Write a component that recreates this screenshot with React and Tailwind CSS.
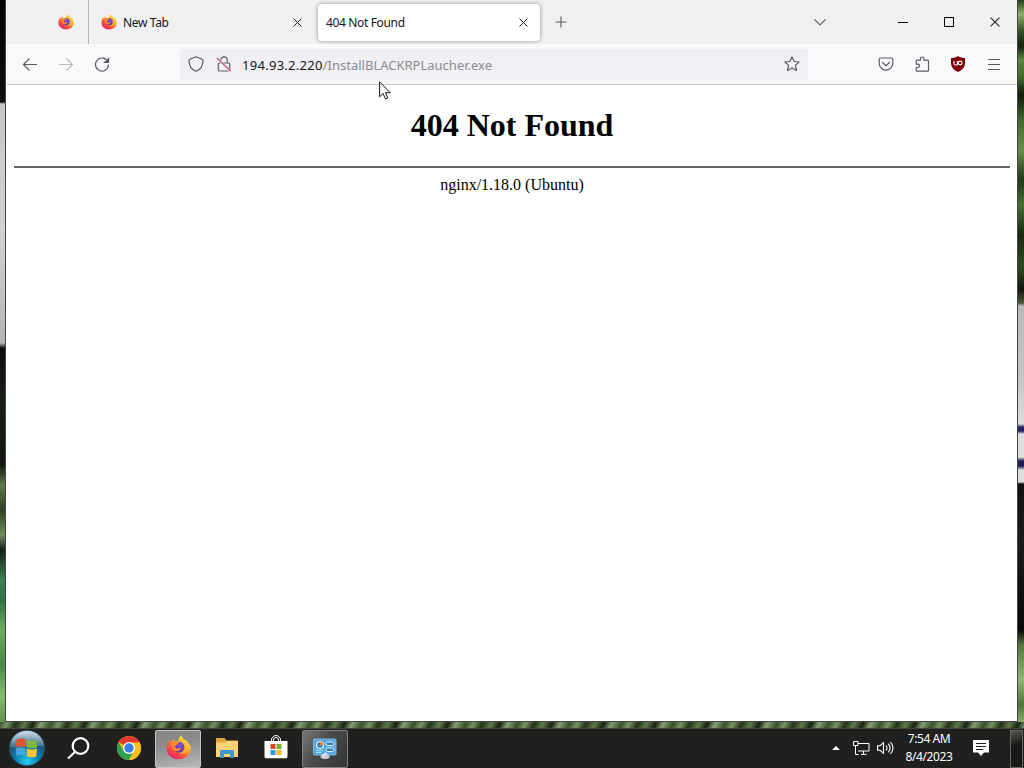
import { useId } from "react";

const FirefoxIcon = ({ size = 16 }) => {
  const id = useId().replace(/[^a-zA-Z0-9]/g, "");
  return (
    <svg width={size} height={size} viewBox="0 0 32 32" className="shrink-0">
      <defs>
        <linearGradient id={`${id}body`} x1="0.85" y1="0.05" x2="0.2" y2="0.95">
          <stop offset="0" stopColor="#fff04a" />
          <stop offset="0.35" stopColor="#ffb52e" />
          <stop offset="0.65" stopColor="#ff5b36" />
          <stop offset="1" stopColor="#e8206e" />
        </linearGradient>
        <radialGradient id={`${id}globe`} cx="0.6" cy="0.35" r="0.65">
          <stop offset="0" stopColor="#8a50dc" />
          <stop offset="1" stopColor="#52389f" />
        </radialGradient>
      </defs>
      <path
        d="M20 0c0 3 2 4.500 4 6.500 1.500.2 2.300 1 3.200 2 3 2.800 4.300 5.500 4.300 9C31.500 25.500 24.500 31 16 31S.8 25 .8 17.500C.8 13 2.500 9.500 4.500 7l.8 2.500C6.500 7.500 8 6 10 5c-.4 1.200-.3 2 .1 2.700 2 .1 3.500.1 5 .8C15.500 5 17.500 2 20 0z"
        fill={`url(#${id}body)`}
      />
      <circle cx="16.500" cy="15.500" r="7" fill={`url(#${id}globe)`} />
      <path
        d="M6 9c2-1 4.500-.6 6 .3 1.500-.6 3.500-.5 4.500.2-.4 2-2 2.800-3.500 3.500-1.400.7-1.300 1.800-.9 2.900 1 1.600 3.200 1.600 5 .8 1.500-.3 2 .6 1.500 1.500-1.200 2.200-3.600 2.900-6 2.500C8 20 6 14.500 6 9z"
        fill="#ff8430"
      />
      <path d="M20.500 7.500c4 3 5 6.500 3.500 10.500-1.500 3.500-4.500 5.500-8 5.200 6 3.300 12.500-.2 13-7.200C29 12 25 9 20.500 7.500z" fill="#ffb932" opacity=".7" />
    </svg>
  );
};

const CloseIcon = ({ size = 9 }) => (
  <svg width={size} height={size} viewBox="0 0 9 9" fill="none" stroke="#222" strokeWidth="1">
    <path d="M.5.5l8 8M8.500.5l-8 8" />
  </svg>
);

const ToolIcon = ({ children, className = "" }) => (
  <svg width="16" height="16" viewBox="0 0 16 16" fill="none" stroke="#5b5b66" strokeWidth="1.200" strokeLinecap="round" strokeLinejoin="round" className={className}>
    {children}
  </svg>
);

const TabStrip = () => (
  <div className="flex h-11 items-center bg-[#f0f0f0]">
    <div className="flex h-full w-[82px] items-center justify-end border-r border-[#b5b5b5] pr-[14px]">
      <FirefoxIcon />
    </div>
    <div className="flex h-full w-[229px] items-center pl-3">
      <FirefoxIcon />
      <span className="ml-1.5 flex-1 pt-[2px] text-[12px] tracking-[-0.35px] text-[#15141a]">New Tab</span>
      <div className="mr-[16px]">
        <CloseIcon />
      </div>
    </div>
    <div className="flex h-[37px] w-[222px] items-center rounded-[4px] bg-white pl-[8px] pr-[12px] shadow-[0_0_4px_rgba(0,0,0,0.4)]">
      <span className="flex-1 pt-[2px] text-[12px] tracking-[-0.35px] text-[#15141a]">404 Not Found</span>
      <CloseIcon />
    </div>
    <div className="flex w-[41px] justify-center">
      <svg width="12" height="12" viewBox="0 0 12 12" stroke="#5b5b66" strokeWidth="1.100">
        <path d="M6 .5v11M.5 6h11" />
      </svg>
    </div>
    <div className="flex-1" />
    <div className="flex w-[46px] justify-center">
      <svg width="12" height="8" viewBox="0 0 12 8" fill="none" stroke="#67676f" strokeWidth="1.200">
        <path d="M.5 1.500L6 7l5.500-5.500" />
      </svg>
    </div>
    <div className="ml-[37px] flex w-[46px] justify-center">
      <div className="h-px w-[10px] bg-black" />
    </div>
    <div className="flex w-[46px] justify-center">
      <div className="size-[10px] border border-black" />
    </div>
    <div className="flex w-[45px] justify-center">
      <CloseIcon size={10} />
    </div>
  </div>
);

const ToolCell = ({ children }) => <div className="flex w-9 justify-center">{children}</div>;

const Toolbar = () => (
  <div className="flex h-[41px] items-center border-b border-[#c9c9ce] bg-[#f9f9fb] px-[5px]">
    <ToolCell>
      <ToolIcon>
        <path d="M14.500 8.500H1.500M7 3L1.500 8.500 7 14" />
      </ToolIcon>
    </ToolCell>
    <ToolCell>
      <ToolIcon className="opacity-40">
        <path d="M1.500 8.500h13M9 3l5.500 5.500L9 14" />
      </ToolIcon>
    </ToolCell>
    <ToolCell>
      <ToolIcon>
        <path d="M14 6A6.500 6.500 0 1 0 14.500 9M14.500 2v4.300h-4.300" />
        <path d="M14.500 3v3.300H11.200z" fill="#5b5b66" />
      </ToolIcon>
    </ToolCell>
    <div className="ml-[60px] flex h-[31px] w-[628px] items-center rounded-[3px] bg-[#f0f0f4]">
      <div className="flex w-8 justify-center">
        <ToolIcon>
          <path d="M8 .8l6.200 2.400c.6.200.8.600.8 1.200C15 9.500 12.500 13.500 8 15.300 3.500 13.500 1 9.500 1 4.400c0-.6.2-1 .8-1.200z" />
        </ToolIcon>
      </div>
      <div className="flex w-[24px] justify-center">
        <ToolIcon>
          <path d="M4.800 7V4a3.200 3.200 0 0 1 6.400 0v3M3.500 7h9c.8 0 1.200.4 1.200 1.200v5.600c0 .8-.4 1.200-1.200 1.200h-9c-.8 0-1.200-.4-1.200-1.200V8.200c0-.8.4-1.200 1.200-1.200z" />
          <path d="M1.800 2.800l12 12" stroke="#f0f0f4" strokeWidth="2.600" />
          <path d="M1.200 2.200l13 12.600" stroke="#c94b72" />
        </ToolIcon>
      </div>
      <span className="ml-[6px] flex-1 pt-[3px] text-[13px] whitespace-nowrap text-[#15141a]">
        <span className="tracking-[0.28px]">194.93.2.220</span>
        <span className="text-[#8b8b92]">/InstallBLACKRPLaucher.exe</span>
      </span>
      <div className="flex w-8 justify-center">
        <ToolIcon>
          <path d="M8 .9l2.100 4.600 5 .5-3.700 3.400 1.100 5L8 11.900l-4.500 2.500 1.100-5L.9 6l5-.5z" />
        </ToolIcon>
      </div>
    </div>
    <div className="flex-1" />
    <ToolCell>
      <ToolIcon>
        <path d="M2.500 2h11c.8 0 1.300.5 1.300 1.300v4a6.800 6.800 0 0 1-13.600 0v-4C1.200 2.500 1.700 2 2.500 2zM4.500 6.500L8 9.700l3.500-3.200" />
      </ToolIcon>
    </ToolCell>
    <ToolCell>
      <ToolIcon>
        <path d="M2.200 5.200c0-.7.300-1 1-1H6.500V2.700a1.700 1.700 0 0 1 3.400 0v1.500h3.600c.7 0 1 .3 1 1v9c0 .7-.3 1-1 1H3.200c-.7 0-1-.3-1-1v-2.700h1.700a1.600 1.600 0 0 0 0-3.400H2.200z" />
      </ToolIcon>
    </ToolCell>
    <ToolCell>
      <svg width="16" height="16" viewBox="0 0 16 16">
        <path d="M8 0c2 1.500 4.500 2 7 2v5c0 4.500-3 7-7 9-4-2-7-4.500-7-9V2c2.500 0 5-.5 7-2z" fill="#800008" />
        <path d="M4 5v2.500c0 1 .5 1.500 1.500 1.500H7.300V5" fill="none" stroke="#fff" strokeWidth="1.100" />
        <circle cx="10.200" cy="7" r="1.900" fill="none" stroke="#fff" strokeWidth="1.100" />
      </svg>
    </ToolCell>
    <ToolCell>
      <svg width="12" height="11" viewBox="0 0 12 11" stroke="#5b5b66" strokeWidth="1">
        <path d="M0 .5h12M0 5.500h12M0 10.500h12" />
      </svg>
    </ToolCell>
  </div>
);

const ErrorPage = () => (
  <div className="flex-1 bg-white px-[7px] pt-[22px] text-center font-['Liberation_Serif',serif] text-black">
    <h1 className="text-[32px] leading-[37px] font-bold">404 Not Found</h1>
    <hr className="mt-[22px] h-[2px] border-0 bg-[#66666b]" />
    <p className="mt-[8px] text-[16px] leading-[18px]">nginx/1.18.0 (Ubuntu)</p>
  </div>
);

const StartOrb = () => (
  <svg width="36" height="36" viewBox="0 0 36 36">
    <defs>
      <radialGradient id="orb" cx="0.5" cy="0.9" r="0.85">
        <stop offset="0" stopColor="#2ed0f5" />
        <stop offset="0.4" stopColor="#087fb5" />
        <stop offset="0.75" stopColor="#20506f" />
        <stop offset="1" stopColor="#6b8fa6" />
      </radialGradient>
      <linearGradient id="gloss" x1="0" y1="0" x2="0" y2="1">
        <stop offset="0" stopColor="#d5e4ee" stopOpacity=".9" />
        <stop offset="1" stopColor="#9fbdd0" stopOpacity=".25" />
      </linearGradient>
    </defs>
    <circle cx="18" cy="18" r="17.500" fill="url(#orb)" stroke="#2f5a75" strokeWidth=".8" />
    <path d="M1.500 17C1 8 8 1 18 1s17 7 16.500 16C26 13 11 20 1.500 17z" fill="url(#gloss)" />
    <path d="M7.500 10c3-2 6-2 9-.5V17c-3-1.200-6-1-9.500.3z" fill="#e0552b" />
    <path d="M17.800 10c3 1.200 6 1.500 9.700-.2l.5 7.500c-3.500 1.300-7 1-10.200-.1z" fill="#86b83c" />
    <path d="M7 18.500c3.500-1.200 6.500-1.300 9.500 0V26c-3-1.500-6-1.500-9 .2z" fill="#45a9e0" />
    <path d="M17.800 18.500c3.200 1.200 6.700 1.300 10.200 0l-.7 8c-3.500 1.300-6.500 1-9.500-.3z" fill="#fbc432" />
  </svg>
);

const ChromeIcon = () => (
  <svg width="24" height="24" viewBox="0 0 24 24">
    <circle cx="12" cy="12" r="12" fill="#fbc116" />
    <path d="M12 12L1.600 6A12 12 0 0 1 22.400 6z" fill="#df3b30" />
    <path d="M1.600 6A12 12 0 0 0 12 24l5.200-9L12 12 6.800 15z" fill="#2da14c" />
    <path d="M12 6.500h10.600A12 12 0 0 1 12 24l5-9z" fill="#fbc116" />
    <circle cx="12" cy="12" r="6" fill="#fff" />
    <circle cx="12" cy="12" r="4.700" fill="#397de9" />
  </svg>
);

const FolderIcon = () => (
  <svg width="24" height="22" viewBox="0 0 24 22">
    <path d="M1 1h8.500l2 2.500H23V8H1z" fill="#e0a33a" />
    <path d="M1 5.500h9l1.500-1.500H23v16H1z" fill="#f9d376" />
    <path d="M5 21v-6.500c0-1 .5-1.500 1.500-1.500h11c1 0 1.500.5 1.500 1.500V21h-4v-4H9v4z" fill="#3d96d4" />
  </svg>
);

const StoreIcon = () => (
  <svg width="24" height="24" viewBox="0 0 24 24">
    <path d="M7.500 7V5a4.500 4.500 0 0 1 9 0v2M9.500 7V5a2.500 2.500 0 0 1 5 0v2" fill="none" stroke="#fff" strokeWidth="1" />
    <path d="M.5 6h23v15.500c0 1.200-.7 1.800-1.800 1.800H2.300c-1.100 0-1.800-.6-1.800-1.800z" fill="#fff" />
    <path d="M6.500 9H11.500v5h-5z" fill="#d9472b" />
    <path d="M12.500 9h5v5h-5z" fill="#7fae2b" />
    <path d="M6.500 15h5v5h-5z" fill="#2f9bd8" />
    <path d="M12.500 15h5v5h-5z" fill="#f4b72b" />
  </svg>
);

const ControlPanelIcon = () => (
  <svg width="26" height="24" viewBox="0 0 26 24">
    <rect x="1.500" y="2" width="22.500" height="16" rx="1" fill="#57a9dc" stroke="#77b9e2" />
    <circle cx="8" cy="8" r="3.500" fill="#3f85bb" stroke="#e3f3fc" strokeWidth="1.200" />
    <path d="M8 8V4.500A3.500 3.500 0 0 1 11.500 8z" fill="#e58b35" />
    <path d="M4 13.500h7M4 15.500h5" stroke="#b2dcf2" />
    <rect x="14" y="5" width="8" height="3.500" rx="1.700" fill="#337fb8" stroke="#def1fb" />
    <rect x="14" y="11" width="8" height="3.500" rx="1.700" fill="#337fb8" stroke="#def1fb" />
    <ellipse cx="13" cy="19.500" rx="4.500" ry="2.500" fill="#ccd1d6" />
    <path d="M11 18.500l3.500-2.500" stroke="#e9edf0" strokeWidth="1.800" />
  </svg>
);

const Taskbar = () => (
  <div className="flex h-[40px] items-center border-t border-[#41443c] bg-[#20211e] text-white">
    <div className="flex w-[54px] justify-center pb-px">
      <StartOrb />
    </div>
    <div className="flex w-[49px] justify-center pb-[2px]">
      <svg width="24" height="24" viewBox="0 0 24 24" fill="none" stroke="#fff" strokeWidth="2.200">
        <circle cx="13.500" cy="10" r="7.800" />
        <path d="M8.200 15.700L1 22.500" />
      </svg>
    </div>
    <div className="flex w-[52px] justify-center pb-[2px]">
      <ChromeIcon />
    </div>
    <div className="flex h-[38px] w-[46px] items-center justify-center rounded-[2px] border border-[#c4c4c4] bg-[linear-gradient(170deg,#858585,#8d8d8d_40%,#b8b8b8)] pb-[2px]">
      <FirefoxIcon size={25} />
    </div>
    <div className="flex w-[52px] justify-center pb-[2px]">
      <FolderIcon />
    </div>
    <div className="flex w-[45px] justify-center pb-[4px]">
      <StoreIcon />
    </div>
    <div className="ml-[4px] flex h-[38px] w-[46px] items-center justify-center rounded-[2px] border border-[#80827f] bg-[linear-gradient(125deg,#777977,#484a49_45%,#343635)]">
      <ControlPanelIcon />
    </div>
    <div className="flex-1" />
    <div className="flex w-6 justify-center pb-[2px]">
      <svg width="8" height="4" viewBox="0 0 8 4">
        <path d="M0 4l4-4 4 4z" fill="#fff" />
      </svg>
    </div>
    <div className="flex w-[26px] justify-center pb-[2px]">
      <svg width="17" height="14" viewBox="0 0 17 14" fill="none" stroke="#fff" strokeWidth="1">
        <path d="M5 2.500h11v7.500H5M8 13.400h5.500M10.500 10v3.500M.5.500h4.500v4H.5zM2.500 4.500v9h3" />
      </svg>
    </div>
    <div className="flex w-[22px] justify-center pb-[2px]">
      <svg width="17" height="14" viewBox="0 0 17 14" fill="none" stroke="#fff" strokeWidth="1.100">
        <path d="M.6 4.700h2.500l3.400-3v10.600l-3.400-3H.6zM9 4.500q2 2.500 0 5M11.300 2.700q3.500 4.300 0 8.600M13.500 1q5 6 0 12" />
      </svg>
    </div>
    <div className="flex w-[66px] flex-col items-center pb-[2px] text-[12px] leading-[18px] tracking-[-0.45px] whitespace-nowrap">
      <span>7:54 AM</span>
      <span className="tracking-[-0.4px]">8/4/2023</span>
    </div>
    <div className="flex w-[38px] justify-center pb-[2px]">
      <svg width="16" height="16" viewBox="0 0 16 16">
        <path d="M0 0h16v12.500h-5L8 16l-3-3.500H0z" fill="#fff" />
        <path d="M3 3.500h10M3 6.500h10M3 9.500h7" stroke="#20211e" strokeWidth="1.200" />
      </svg>
    </div>
    <div className="ml-[10px] mr-[1px] h-[38px] w-[13px] border border-[#656662] bg-[linear-gradient(160deg,#555652,#191a17_40%)]" />
  </div>
);

// strips of wallpaper left visible around the browser window
const LeftWallpaper = () => (
  <div className="w-[5px] bg-[linear-gradient(to_bottom,#020202_0,#101010_102px,#c6c6c6_104px,#d2d2d2_230px,#b5b5b5_343px,#0b0d0a_348px,#182016_400px,#10170e_465px,#62794a_485px,#2d4224_510px,#6f8c5e_535px,#142016_550px,#3e8050_580px,#2f7140_600px,#6aad5d_630px,#498745_665px,#83bd6f_695px,#64914d_722px)]" />
);

const RightWallpaper = () => (
  <div className="w-[6px] bg-[linear-gradient(to_bottom,#244017_0,#91ad6d_14px,#304c21_32px,#15200f_46px,#59853f_60px,#426b2d_77px,#101a0c_95px,#43672d_120px,#6a8e4c_150px,#22381a_180px,#486f33_205px,#172711_235px,#31491f_265px,#11190d_290px,#4a5740_303px,#b9b9b9_306px,#c5c5c5_380px,#dddddd_424px,#24245a_427px,#24245a_431px,#dcdce0_434px,#dedede_457px,#20204f_461px,#20204f_466px,#dddddd_470px,#dddddd_482px,#111_484px,#1c1c1c_540px,#080808_630px,#577540_645px,#91b674_680px,#4d713a_705px,#88ad66_722px)]" />
);

const Cursor = () => (
  <svg width="13" height="20" viewBox="0 0 13 20" className="absolute top-[81px] left-[379px]">
    <path d="M.6.800v15l3.500-3.300L6.500 18l2.300-1-2.300-5.300h4.700z" fill="#fff" stroke="#111" strokeWidth="1" />
  </svg>
);

export default function App() {
  return (
    <div className="relative flex h-[768px] w-[1024px] flex-col overflow-hidden font-['Noto_Sans',sans-serif]">
      <div className="flex h-[722px]">
        <LeftWallpaper />
        <div className="flex w-[1013px] flex-col border-x border-b border-[#454745]">
          <div className="flex flex-1 flex-col bg-white">
            <div className="bg-[#f0f0f0] pl-px">
              <TabStrip />
            </div>
            <div className="bg-[#f9f9fb] pl-px">
              <Toolbar />
            </div>
            <div className="flex flex-1 pl-px">
              <ErrorPage />
            </div>
          </div>
        </div>
        <RightWallpaper />
      </div>
      <div className="h-[6px] bg-[repeating-linear-gradient(115deg,#39502c_0px,#789263_7px,#223319_15px,#60794b_23px,#182313_31px,#849e70_38px,#39502c_47px)]" />
      <Taskbar />
      <Cursor />
    </div>
  );
}
